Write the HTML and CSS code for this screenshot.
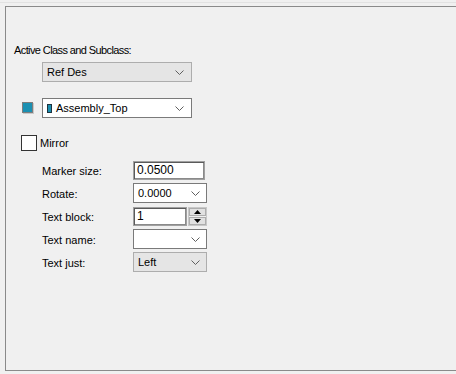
FILE: index.html
```html
<!DOCTYPE html>
<html lang="en">
<head>
  <meta charset="UTF-8" />
  <title>Options</title>
  <link rel="stylesheet" href="styles.css">
</head>
<body>
  <div class="topline"></div>
  <div class="group">
    <div class="heading">Active Class and Subclass:</div>
    <div class="combo combo-wide combo-disabled"><span>Ref Des</span><svg class="chev" width="9" height="5" viewBox="0 0 9 5"><polyline points="0.5,0.5 4.5,4.5 8.5,0.5" /></svg></div>
    <div class="layer-row">
      <span class="swatch"></span>
      <div class="combo combo-wide"><span class="combo-text"><span class="mini-swatch"></span>Assembly_Top</span><svg class="chev" width="9" height="5" viewBox="0 0 9 5"><polyline points="0.5,0.5 4.5,4.5 8.5,0.5" /></svg></div>
    </div>
    <label class="mirror"><span class="checkbox"></span>Mirror</label>
    <div class="props">
      <span class="prop-label">Marker size:</span>
      <div class="edit">0.0500</div>
      <span class="prop-label">Rotate:</span>
      <div class="combo combo-small"><span>0.0000</span><svg class="chev" width="9" height="5" viewBox="0 0 9 5"><polyline points="0.5,0.5 4.5,4.5 8.5,0.5" /></svg></div>
      <span class="prop-label">Text block:</span>
      <div class="spin-wrap">
        <div class="edit edit-spin">1</div>
        <div class="spin">
          <span class="spin-btn"><svg width="7" height="4" viewBox="0 0 7 4"><polygon points="3.5,0 7,4 0,4" /></svg></span>
          <span class="spin-btn"><svg width="7" height="4" viewBox="0 0 7 4"><polygon points="0,0 7,0 3.5,4" /></svg></span>
        </div>
      </div>
      <span class="prop-label">Text name:</span>
      <div class="combo combo-small"><span></span><svg class="chev" width="9" height="5" viewBox="0 0 9 5"><polyline points="0.5,0.5 4.5,4.5 8.5,0.5" /></svg></div>
      <span class="prop-label">Text just:</span>
      <div class="combo combo-small combo-disabled"><span>Left</span><svg class="chev" width="9" height="5" viewBox="0 0 9 5"><polyline points="0.5,0.5 4.5,4.5 8.5,0.5" /></svg></div>
    </div>
  </div>
</body>
</html>
```

FILE: styles.css
```css
html,body{margin:0;padding:0;width:100%;height:100%;overflow:hidden;background:#f0f0f0;font-family:'Liberation Sans',Arial,sans-serif;font-size:11px;color:#000}
.topline{height:1px;margin-top:2px;background:#e2e2e2}
.group{box-sizing:border-box;margin:3px 0 0 5px;width:calc(100% - 5px);height:365px;border:1px solid #8a8a8a;border-right:none;padding:36px 0 0 8px;display:flex;flex-direction:column;align-items:flex-start}
.heading{height:14px;line-height:14px;letter-spacing:-0.6px}
.combo{box-sizing:border-box;height:20px;display:flex;align-items:center;justify-content:space-between;background:#fff;border:1px solid #7a7a7a;padding:0 6px 0 4px}
.combo-wide{width:150px;padding-right:7px}
.combo-small{width:74px}
.combo-disabled{background:#e5e5e5;border-color:#adadad}
.group > .combo{margin:5px 0 0 28px}
.chev{fill:none;stroke:#5f5f5f;stroke-width:1}
.combo-text{display:flex;align-items:center;gap:4px}
.mini-swatch{display:inline-block;width:3px;height:7px;background:#1a8eae;border:1px solid #1e3340}
.layer-row{margin-top:16px;display:flex;align-items:center}
.swatch{box-sizing:border-box;width:11px;height:11px;margin:0 9px 1px 8px;background:#1b90b2;border:1px solid #7d7d7d;box-shadow:1px 1px 0 #c9c9c9}
.mirror{margin:17px 0 0 7px;display:flex;align-items:center;gap:3px;height:16px}
.checkbox{box-sizing:border-box;width:16px;height:16px;background:#fff;border:1px solid #333}
.props{margin:9px 0 0 28px;display:grid;grid-template-columns:91px 74px;grid-auto-rows:20px;row-gap:3px;align-items:center}
.prop-label{padding-top:2px}
.edit{box-sizing:border-box;height:19px;width:72px;background:#fff;border:1px solid #a0a0a0;box-shadow:inset 1px 1px 0 #5a5a5a,inset -1px -1px 0 #8a8a8a;padding:1px 3px;line-height:15px;font-size:12px}
.spin-wrap{display:flex;height:19px;gap:1px}
.edit-spin{width:54px;height:19px}
.spin{box-sizing:border-box;width:19px;height:19px;border:1px solid #c8c8c8;display:flex;flex-direction:column;gap:1px;background:#f0f0f0}
.spin-btn{flex:1;display:flex;align-items:center;justify-content:center;background:#e1e1e1;border:1px solid #adadad}
.spin-btn svg{fill:#000}
```
